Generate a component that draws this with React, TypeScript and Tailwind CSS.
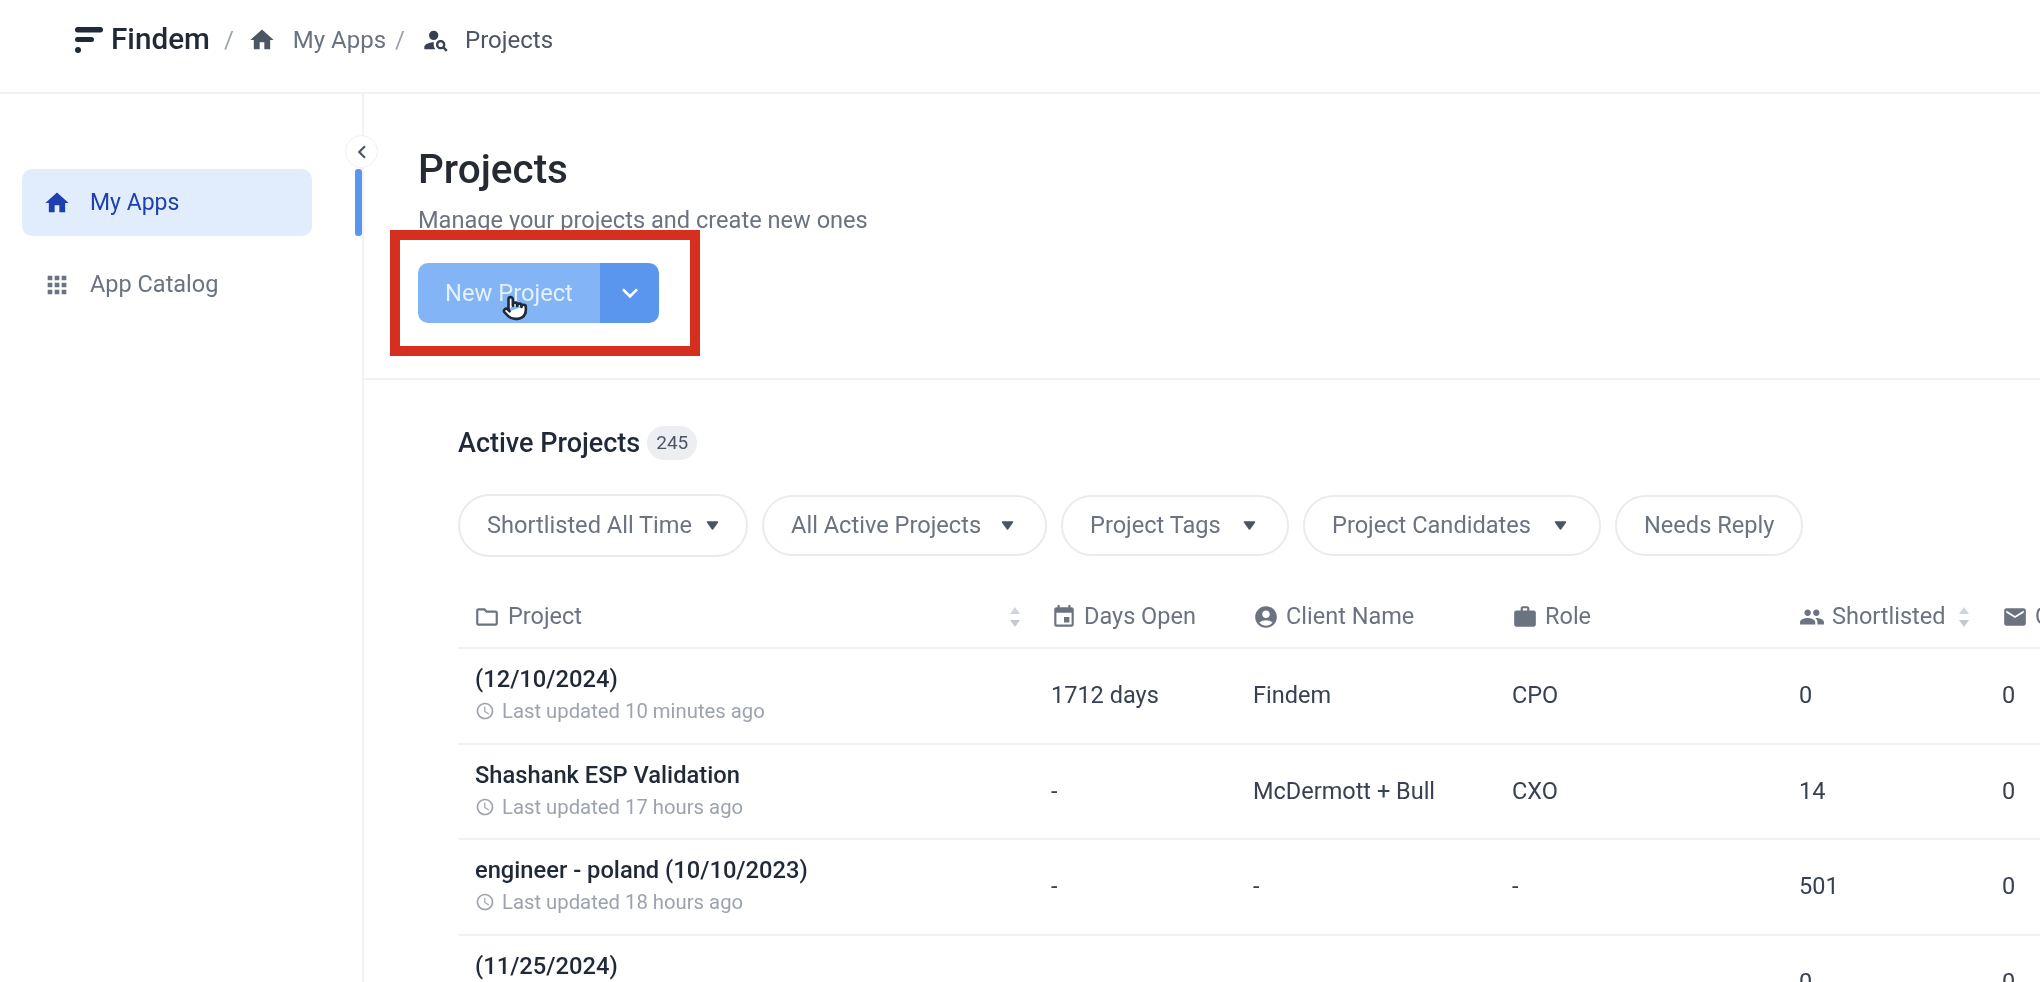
import React from 'react';
import {
  MdHome,
  MdApps,
  MdPersonSearch,
  MdKeyboardArrowDown,
  MdChevronLeft,
  MdOutlineFolder,
  MdEvent,
  MdAccountCircle,
  MdWork,
  MdPeople,
  MdEmail,
  MdAccessTime,
} from 'react-icons/md';
import { Pointer } from 'lucide-react';

const filters = [
  { label: 'Shortlisted All Time', caret: 'ml-[14px]', w: 'w-[290px]', h: 'h-[63px]' },
  { label: 'All Active Projects', caret: 'ml-[20px]', w: 'w-[285px]', h: 'h-[61px]' },
  { label: 'Project Tags', caret: 'ml-[22px]', w: 'w-[228px]', h: 'h-[61px]' },
  { label: 'Project Candidates', caret: 'ml-[23px]', w: 'w-[298px]', h: 'h-[61px]' },
  { label: 'Needs Reply', caret: '', w: 'w-[188px]', h: 'h-[61px]' },
];

const rows = [
  { name: '(12/10/2024)', updated: 'Last updated 10 minutes ago', days: '1712 days', client: 'Findem', role: 'CPO', shortlisted: '0', contacted: '0' },
  { name: 'Shashank ESP Validation', updated: 'Last updated 17 hours ago', days: '-', client: 'McDermott + Bull', role: 'CXO', shortlisted: '14', contacted: '0' },
  { name: 'engineer - poland (10/10/2023)', updated: 'Last updated 18 hours ago', days: '-', client: '-', role: '-', shortlisted: '501', contacted: '0' },
  { name: '(11/25/2024)', updated: 'Last updated 18 hours ago', days: '-', client: '-', role: '-', shortlisted: '0', contacted: '0' },
];

const gridCols = 'grid grid-cols-[593px_202px_259px_287px_203px_200px]';

const SortArrows = ({ className = '' }: { className?: string }) => (
  <svg width="14" height="22" viewBox="0 0 14 22" className={`shrink-0 ${className}`}>
    <path d="M7 1l5 7H2z" fill="#d1d5db" />
    <path d="M7 21l5-7H2z" fill="#c4c8d0" />
  </svg>
);

const Caret = ({ className }: { className: string }) => (
  <svg width="13" height="9" viewBox="0 0 13 9" className={`shrink-0 ${className}`}>
    <path d="M1.5 1h10L6.5 8z" fill="#4b5563" stroke="#4b5563" strokeWidth="1.5" strokeLinejoin="round" />
  </svg>
);

const Logo = () => (
  <svg width="30" height="30" viewBox="0 0 30 30" className="shrink-0">
    <rect x="1" y="2" width="28" height="5.5" rx="2.7" fill="#1f2937" />
    <rect x="1" y="12" width="19" height="5" rx="2.5" fill="#1f2937" />
    <circle cx="4" cy="25" r="3" fill="#1f2937" />
  </svg>
);

const App: React.FC = () => {
  return (
    <div className="h-[982px] w-[2040px] overflow-hidden bg-white font-['Roboto',sans-serif] blur-[0.6px]">
      {/* Top bar */}
      <header className="flex h-[94px] items-center border-b-2 border-[#f1f2f4] pb-[13px] pl-[74px]">
        <Logo />
        <span className="ml-[7px] text-[29.7px] font-medium text-[#1f2937]">Findem</span>
        <span className="ml-[14px] text-[24px] text-[#9ca3af]">/</span>
        <MdHome size={28} className="ml-[14px] text-[#4b5563]" />
        <span className="ml-[17px] text-[24px] text-[#6b7280]">My Apps</span>
        <span className="ml-[9px] text-[24px] text-[#9ca3af]">/</span>
        <MdPersonSearch size={28} className="ml-[17px] text-[#374151]" />
        <span className="ml-[15px] text-[24px] text-[#4b5563]">Projects</span>
      </header>

      <div className="flex">
        {/* Sidebar */}
        <aside className="relative h-[888px] w-[364px] shrink-0 border-r-2 border-[#f1f2f4] pl-[22px] pt-[75px]">
          <div className="flex h-[67px] w-[290px] items-center rounded-[10px] bg-[#e1edfc] pl-[21px] text-[#1e40af]">
            <MdHome size={28} />
            <span className="ml-[19px] pt-[2px] text-[23px]">My Apps</span>
          </div>
          <div className="mt-[15px] flex h-[67px] w-[290px] items-center pl-[21px] text-[#6b7280]">
            <MdApps size={28} />
            <span className="ml-[19px] text-[23.5px]">App Catalog</span>
          </div>
          <div className="absolute right-0 top-[75px] h-[67px] w-[7px] rounded-[3px] bg-[#5b96ee]" />
          <div className="absolute right-[-16px] top-[41px] flex h-[33px] w-[33px] items-center justify-center rounded-full border border-[#eef0f3] bg-white text-[#4b5563]">
            <MdChevronLeft size={26} />
          </div>
        </aside>

        <main className="min-w-0 flex-1">
          {/* Page heading */}
          <section className="h-[286px] border-b-2 border-[#f1f2f4] pl-[54px] pt-[50px]">
            <h1 className="text-[40.5px] font-medium leading-[50px] text-[#262b33]">Projects</h1>
            <p className="mt-[12px] text-[23.6px] leading-[28px] text-[#6b7280]">Manage your projects and create new ones</p>
            <div className="relative mt-[29px] w-[241px]">
              <div className="flex h-[60px] overflow-hidden rounded-[10px] text-white">
                <div className="flex w-[182px] items-center justify-center bg-[#82b4f6] pt-[2px] text-[23.7px] text-[#e6f1ff]">New Project</div>
                <div className="flex w-[59px] items-center justify-center bg-[#5b96ee]">
                  <MdKeyboardArrowDown size={32} />
                </div>
              </div>
              {/* Red callout and cursor */}
              <div className="absolute left-[-28px] top-[-33px] h-[126px] w-[310px] border-[10px] border-[#d62f20]" />
              <Pointer size={26} fill="#ffffff" strokeWidth={2.4} className="absolute left-[84px] top-[32px] text-[#1f2937]" />
            </div>
          </section>

          {/* Projects table */}
          <section className="pl-[94px] pt-[45px]">
            <div className="flex items-center">
              <h2 className="text-[27px] font-medium leading-[36px] text-[#1f2937]">Active Projects</h2>
              <span className="ml-[7px] flex h-[34px] w-[50px] items-center justify-center rounded-full bg-[#eceef1] text-[19px] text-[#4b5563]">245</span>
            </div>

            <div className="mt-[33px] flex items-center gap-[14px]">
              {filters.map((f) => (
                <div
                  key={f.label}
                  className={`flex ${f.w} ${f.h} shrink-0 items-center rounded-full border-2 border-[#e9ebef] pl-[27px] text-[23.6px] text-[#6b7280]`}
                >
                  <span>{f.label}</span>
                  {f.caret && <Caret className={f.caret} />}
                </div>
              ))}
            </div>

            <div className={`${gridCols} mt-[29px] h-[63px] w-[1800px] items-center border-b-2 border-[#f1f2f4] text-[23.5px] text-[#6b7280]`}>
              <div className="flex items-center pl-[16px]">
                <MdOutlineFolder size={26} />
                <span className="ml-[8px]">Project</span>
                <span className="ml-auto mr-[29px]"><SortArrows /></span>
              </div>
              <div className="flex items-center gap-[7px]"><MdEvent size={26} />Days Open</div>
              <div className="flex items-center gap-[7px]"><MdAccountCircle size={26} />Client Name</div>
              <div className="flex items-center gap-[7px]"><MdWork size={26} />Role</div>
              <div className="flex items-center gap-[7px]"><MdPeople size={26} />Shortlisted<SortArrows className="ml-[5px]" /></div>
              <div className="flex items-center gap-[7px]"><MdEmail size={26} />Contacted</div>
            </div>

            {rows.map((r) => (
              <div
                key={r.name}
                className={`${gridCols} h-[95.5px] w-[1800px] items-center border-b-2 border-[#f1f2f4] text-[23.5px] text-[#374151]`}
              >
                <div className="pb-[4px] pl-[17px]">
                  <div className="text-[23.7px] font-medium leading-[30px] text-[#1f2937]">{r.name}</div>
                  <div className="mt-[5px] flex items-center text-[20.3px] leading-[24px] text-[#9ca3af]">
                    <MdAccessTime size={20} />
                    <span className="ml-[7px]">{r.updated}</span>
                  </div>
                </div>
                <div>{r.days}</div>
                <div>{r.client}</div>
                <div>{r.role}</div>
                <div>{r.shortlisted}</div>
                <div>{r.contacted}</div>
              </div>
            ))}
          </section>
        </main>
      </div>
    </div>
  );
};

export default App;
